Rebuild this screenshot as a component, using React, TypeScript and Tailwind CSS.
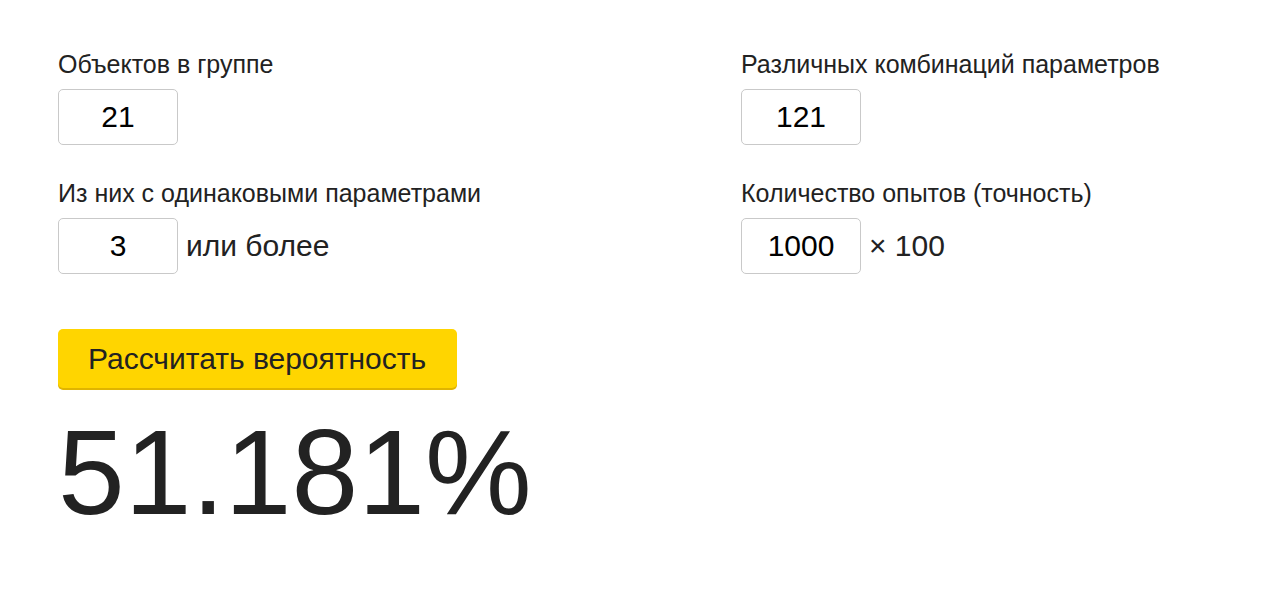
import React from 'react';

const Field = ({ label, value, suffix, className = '' }: { label: string; value: string; suffix?: string; className?: string }) => (
  <div className={className}>
    <div className="text-[25px] leading-[28px] mb-[11px]">{label}</div>
    <div className="flex items-center">
      <input
        defaultValue={value}
        className="w-[120px] h-[56px] border border-[#c9c9c9] rounded-[5px] text-center text-[30px] text-black outline-none bg-white"
      />
      {suffix && <span className="ml-[8px] text-[30px] leading-none">{suffix}</span>}
    </div>
  </div>
);

export default function App() {
  return (
    <div className="min-h-[593px] bg-white text-[#222] pt-[50px] pl-[58px] font-['Liberation_Sans',Arial,sans-serif]">
      <div className="flex">
        <div className="w-[683px]">
          <Field label="Объектов в группе" value="21" />
          <Field label="Из них с одинаковыми параметрами" value="3" suffix="или более" className="mt-[34px]" />
        </div>
        <div>
          <Field label="Различных комбинаций параметров" value="121" />
          <Field label="Количество опытов (точность)" value="1000" suffix="× 100" className="mt-[34px]" />
        </div>
      </div>
      <button className="mt-[55px] w-[399px] h-[59px] rounded-[5px] bg-[#ffd500] shadow-[0_2px_0_#e0b400] text-left pl-[30px] text-[30px] text-[#222]">
        Рассчитать вероятность
      </button>
      <div className="mt-[24px] text-[120px] leading-none">51.181%</div>
    </div>
  );
}
